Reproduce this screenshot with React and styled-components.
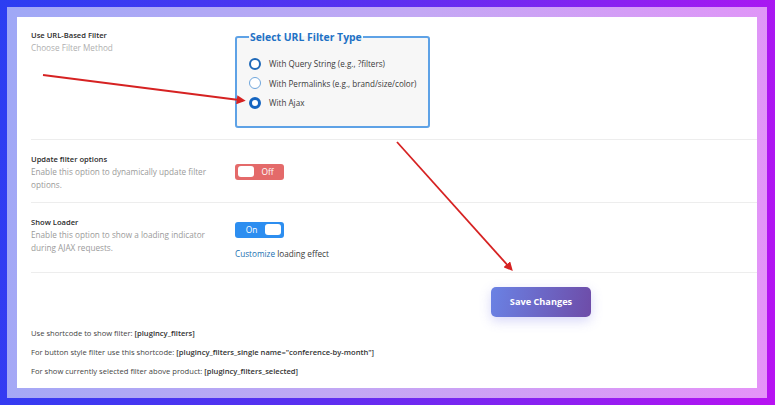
import styled, { createGlobalStyle } from 'styled-components';

// --- ESTILOS ---
const GlobalStyle = createGlobalStyle`
  html, body {
    margin: 0;
    padding: 0;
    width: 775px;
    height: 405px;
    overflow: hidden;
  }
  body {
    font-family: "Open Sans", "Noto Sans", sans-serif;
    background: linear-gradient(100deg, #2b3ef2 0%, #5a2ff0 45%, #b812f2 100%);
  }
`;

const Frame = styled.div`
  margin: 7px 8px 7px 7px;
  padding: 10px;
  background: linear-gradient(100deg, #9fa8f6 0%, #c3a8f4 50%, #e592f8 100%);
`;

const Panel = styled.div`
  position: relative;
  background: #fff;
  height: 371px;
  padding-left: 14px;
  box-sizing: border-box;
`;

const Row = styled.div`
  display: grid;
  grid-template-columns: 204px 1fr;
  padding: ${(p) => p.$pad};
  border-bottom: 1px solid #ededed;
`;

const Label = styled.div`
  display: flex;
  flex-direction: column;
`;

const Title = styled.span`
  font-size: 7.6px;
  line-height: 12px;
  font-weight: 600;
  color: #2c2c2c;
`;

const Desc = styled.span`
  font-size: 8.2px;
  line-height: 13px;
  color: ${(p) => (p.$light ? '#b0b0b0' : '#9a9a9a')};
  max-width: 185px;
`;

const Control = styled.div`
  display: flex;
  flex-direction: column;
  align-items: flex-start;
  gap: 10px;
  padding-top: ${(p) => p.$offset || 0}px;
`;

const FieldBox = styled.fieldset`
  width: 195px;
  box-sizing: border-box;
  margin: 0;
  padding: 9px 4px 13px 12px;
  border: 2px solid #5ea2e6;
  border-radius: 3px;
  background: #f7f7f7;
`;

const Legend = styled.legend`
  padding: 0 1px;
  font-size: 10.4px;
  line-height: 16px;
  font-weight: 700;
  color: #1f72c6;
`;

const RadioRow = styled.label`
  display: flex;
  align-items: center;
  gap: 8px;
  height: 19.5px;
  font-size: 8.1px;
  color: #3a3a3a;
  white-space: nowrap;
`;

const Radio = styled.span`
  flex: none;
  width: 12px;
  height: 12px;
  box-sizing: border-box;
  border-radius: 50%;
  border: ${(p) => (p.$checked ? '3.5px solid #1565c0' : p.$light ? '1.3px solid #6fa6dc' : '2px solid #1e68b8')};
  background: #fff;
`;

const Toggle = styled.div`
  width: 49px;
  height: 16px;
  box-sizing: border-box;
  border-radius: 3px;
  padding: 0 3px;
  display: flex;
  align-items: center;
  flex-direction: ${(p) => (p.$on ? 'row' : 'row-reverse')};
  justify-content: space-between;
  background: ${(p) => (p.$on ? '#2d8ef0' : '#e46a6a')};
  font-size: 8.4px;
  color: #fff;
`;

const ToggleText = styled.span`
  flex: 1;
  text-align: center;
`;

const Knob = styled.span`
  width: 16px;
  height: 11px;
  border-radius: 3px;
  background: #fff;
`;

const Note = styled.span`
  font-size: 8.2px;
  line-height: 12px;
  color: #3a3a3a;
`;

const Link = styled.a`
  color: #2271b1;
  text-decoration: none;
`;

const Footer = styled.div`
  padding-top: 14px;
  display: flex;
  flex-direction: column;
`;

const SaveButton = styled.button`
  margin-left: 460px;
  width: 100px;
  height: 30px;
  border: none;
  border-radius: 5px;
  background: linear-gradient(100deg, #6a82e4 0%, #6e4ca8 100%);
  box-shadow: 0 4px 12px rgba(110, 110, 230, 0.28);
  color: #fff;
  font-family: "Open Sans", sans-serif;
  font-size: 9.2px;
  font-weight: 700;
`;

const Shortcodes = styled.div`
  margin-top: 10px;
  display: flex;
  flex-direction: column;
  gap: 7px;
`;

const Line = styled.span`
  font-size: 7.6px;
  line-height: 12px;
  color: #444;

  b {
    font-weight: 600;
    color: #333;
  }
`;

const Arrows = styled.svg`
  position: absolute;
  inset: 0;
  width: 100%;
  height: 100%;
  pointer-events: none;
`;

const radios = [
  { label: 'With Query String (e.g., ?filters)' },
  { label: 'With Permalinks (e.g., brand/size/color)', light: true },
  { label: 'With Ajax', checked: true },
];

// --- COMPONENTE ---
export default function App() {
  return (
    <>
      <GlobalStyle />
      <Frame>
        <Panel>
          <Row $pad="12px 0 11px">
            <Label>
              <Title>Use URL-Based Filter</Title>
              <Desc $light>Choose Filter Method</Desc>
            </Label>
            <Control>
              <FieldBox>
                <Legend>Select URL Filter Type</Legend>
                {radios.map((r) => (
                  <RadioRow key={r.label}>
                    <Radio $checked={r.checked} $light={r.light} />
                    {r.label}
                  </RadioRow>
                ))}
              </FieldBox>
            </Control>
          </Row>

          <Row $pad="13px 0 11px">
            <Label>
              <Title>Update filter options</Title>
              <Desc>Enable this option to dynamically update filter options.</Desc>
            </Label>
            <Control $offset={11}>
              <Toggle>
                <ToggleText>Off</ToggleText>
                <Knob />
              </Toggle>
            </Control>
          </Row>

          <Row $pad="13px 0 12px">
            <Label>
              <Title>Show Loader</Title>
              <Desc>Enable this option to show a loading indicator during AJAX requests.</Desc>
            </Label>
            <Control $offset={6}>
              <Toggle $on>
                <ToggleText>On</ToggleText>
                <Knob />
              </Toggle>
              <Note>
                <Link href="#">Customize</Link> loading effect
              </Note>
            </Control>
          </Row>

          <Footer>
            <SaveButton>Save Changes</SaveButton>
            <Shortcodes>
              <Line>
                Use shortcode to show filter: <b>[plugincy_filters]</b>
              </Line>
              <Line>
                For button style filter use this shortcode:{' '}
                <b>[plugincy_filters_single name="conference-by-month"]</b>
              </Line>
              <Line>
                For show currently selected filter above product: <b>[plugincy_filters_selected]</b>
              </Line>
            </Shortcodes>
          </Footer>

          <Arrows viewBox="0 0 740 371">
            <defs>
              <marker id="head" markerWidth="5" markerHeight="5" refX="3.5" refY="2.5" orient="auto" markerUnits="strokeWidth">
                <path d="M0,0 L5,2.5 L0,5 Z" fill="#d62222" />
              </marker>
            </defs>
            <line x1="26" y1="58" x2="226" y2="83.5" stroke="#d62222" strokeWidth="1.8" markerEnd="url(#head)" />
            <line x1="380" y1="125" x2="494" y2="252" stroke="#d62222" strokeWidth="1.8" markerEnd="url(#head)" />
          </Arrows>
        </Panel>
      </Frame>
    </>
  );
}
